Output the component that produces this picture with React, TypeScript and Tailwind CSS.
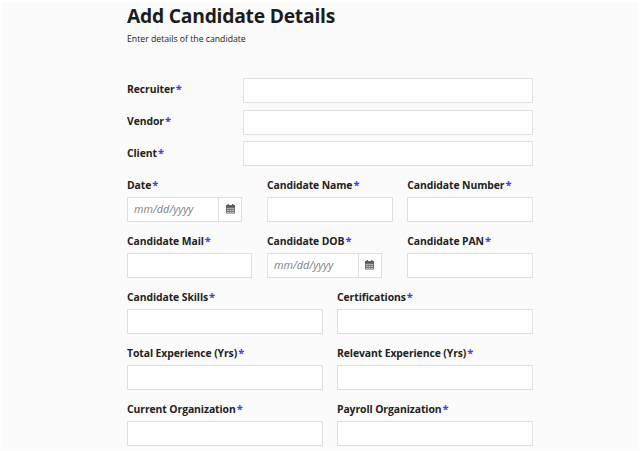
import React from 'react';

interface FieldProps {
  label: string;
  type?: 'text' | 'date';
}

const CalendarIcon: React.FC = () => (
  <svg width="9" height="10" viewBox="0 0 9 10" fill="none" aria-hidden="true">
    <path d="M0 1.2h9v8.3h-9z" fill="#6e6e6e" />
    <path d="M2.3 0v2M6.7 0v2" stroke="#666" strokeWidth="1.4" />
    <path d="M1 4.4h7M1 6.4h7M1 8.3h7" stroke="#c8c8c8" strokeWidth="1" />
    <path d="M3.3 3.5v5.3M5.7 3.5v5.3" stroke="#808080" strokeWidth="0.8" />
    <path d="M0 1.2h9v2.1h-9z" fill="#5c5c5c" />
  </svg>
);

const Label: React.FC<{ text: string; className?: string }> = ({ text, className = '' }) => (
  <label className={`flex whitespace-nowrap text-[10.4px] leading-4 font-bold tracking-[-0.09px] text-[#222] ${className}`}>
    {text}
    <span className="ml-px text-[11px] text-[#3a3aff]">*</span>
  </label>
);

const TextInput: React.FC<{ label: string; className?: string }> = ({ label, className = 'w-full' }) => (
  <input
    aria-label={label}
    className={`block h-[25px] border border-[#dfdfdf] bg-white px-1.5 text-[10.5px] outline-none ${className}`}
  />
);

const InlineField: React.FC<FieldProps> = ({ label }) => (
  <div className="flex h-[25px] items-start">
    <Label text={label} className="w-[116px] pt-[3.4px]" />
    <TextInput label={label} className="w-[290px]" />
  </div>
);

const Field: React.FC<FieldProps> = ({ label, type = 'text' }) => (
  <div className="h-14">
    <Label text={label} className="mb-1" />
    {type === 'date' ? (
      <div className="flex h-[25px] w-[115px] border border-[#dfdfdf] bg-white">
        <input
          aria-label={label}
          placeholder="mm/dd/yyyy"
          className="w-[91px] border-r border-[#dfdfdf] pl-1.5 text-[10.9px] italic outline-none placeholder:text-[#808080]"
        />
        <button type="button" aria-label="Open calendar" className="flex flex-1 items-center justify-center pb-px">
          <CalendarIcon />
        </button>
      </div>
    ) : (
      <TextInput label={label} />
    )}
  </div>
);

const topFields = ['Recruiter', 'Vendor', 'Client'];

const personFields: FieldProps[] = [
  { label: 'Date', type: 'date' },
  { label: 'Candidate Name' },
  { label: 'Candidate Number' },
  { label: 'Candidate Mail' },
  { label: 'Candidate DOB', type: 'date' },
  { label: 'Candidate PAN' },
];

const detailFields = [
  'Candidate Skills',
  'Certifications',
  'Total Experience (Yrs)',
  'Relevant Experience (Yrs)',
  'Current Organization',
  'Payroll Organization',
];

const App: React.FC = () => (
  <div className="h-[451px] w-[640px] overflow-hidden border-2 border-b-1 border-white bg-[#fbfbfb] font-['Open_Sans','Noto_Sans',sans-serif] text-[#222]">
    <form className="ml-[125px] w-[406px]">
      <h1 className="text-[19.3px] leading-7 font-bold tracking-[-0.24px] whitespace-nowrap text-[#1c1c1c]">
        Add Candidate Details
      </h1>
      <p className="mt-[3px] text-[8.7px] leading-3 text-[#222]">Enter details of the candidate</p>

      <div className="mt-[33px] flex flex-col gap-[6.7px]">
        {topFields.map((label) => (
          <InlineField key={label} label={label} />
        ))}
      </div>

      <div className="mt-[10.6px] grid grid-cols-[125.3px_125.7px_125.7px] gap-x-[14.65px]">
        {personFields.map((field) => (
          <Field key={field.label} {...field} />
        ))}
      </div>

      <div className="grid grid-cols-2 gap-x-[14px]">
        {detailFields.map((label) => (
          <Field key={label} label={label} />
        ))}
      </div>
    </form>
  </div>
);

export default App;
